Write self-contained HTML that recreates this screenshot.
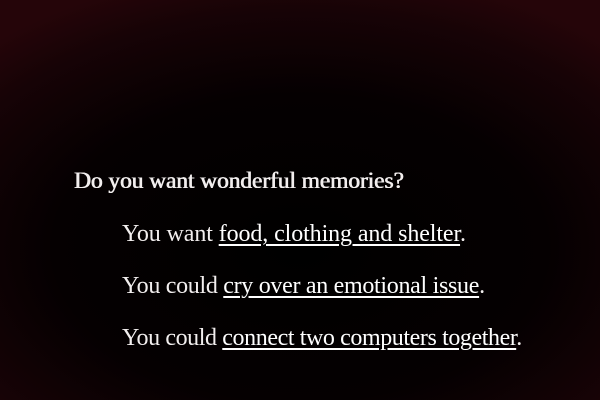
<!DOCTYPE html>
<html><head><style>
html,body{margin:0;padding:0}
body{width:600px;height:400px;overflow:hidden;position:relative;
background:radial-gradient(ellipse 75% 70% at 50% 62%, #000 0%, #050001 55%, #170306 85%, #250509 100%);
font-family:"Liberation Serif",serif;color:#f2eeee;}
.t{position:absolute;white-space:nowrap;font-size:24px;letter-spacing:-0.1px}
.h{left:74px;top:168px;font-size:23.5px;text-shadow:0.5px 0 0 #f2eeee,-0.2px 0 0 #f2eeee}
a{color:#fff;text-decoration:underline;text-underline-offset:3px;text-decoration-thickness:1.5px}
</style></head><body>
<div class="t h">Do you want wonderful memories?</div>
<div class="t" style="left:122px;top:221px">You want <a>food, clothing and shelter</a>.</div>
<div class="t" style="left:122px;top:273px;letter-spacing:-0.3px">You could <a>cry over an emotional issue</a>.</div>
<div class="t" style="left:122px;top:325px;letter-spacing:-0.4px">You could <a>connect two computers together</a>.</div>
</body></html>
